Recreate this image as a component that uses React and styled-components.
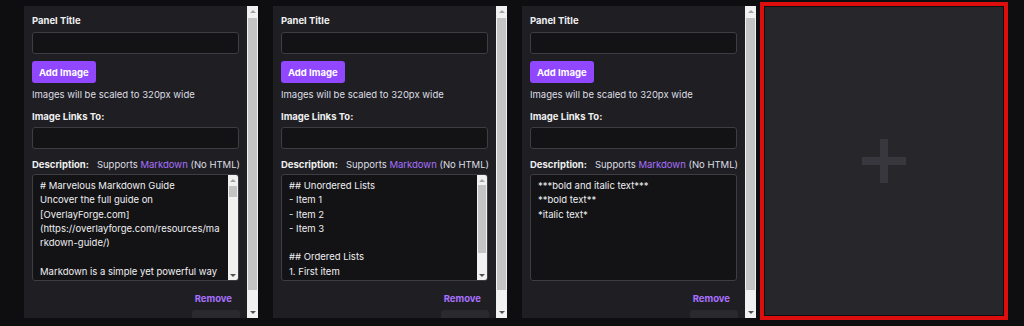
import React from "react";
import styled, { createGlobalStyle } from "styled-components";

const guideText = `# Marvelous Markdown Guide
Uncover the full guide on [OverlayForge.com](https://overlayforge.com/resources/markdown-guide/)

Markdown is a simple yet powerful way to format the text of your panels without writing any HTML.

## Headings
# Heading 1
## Heading 2
### Heading 3

## Emphasis
***bold and italic text***
**bold text**
*italic text*
~~strikethrough~~

## Unordered Lists
- Item 1
- Item 2
- Item 3

## Ordered Lists
1. First item
2. Second item
3. Third item

## Links
[OverlayForge](https://overlayforge.com)

## Quotes
> Quoted text goes here

## Horizontal Rule
---

Have fun making your panels stand out!`;

const listsText = `## Unordered Lists
- Item 1
- Item 2
- Item 3

## Ordered Lists
1. First item
2. Second item
3. Third item`;

const emphasisText = `***bold and italic text***
**bold text**
*italic text*`;

// thumb values are fractions of the scroll rail
const panels = [
  { id: 1, description: guideText, textThumb: { top: 0.01, size: 0.13 } },
  { id: 2, description: listsText, textThumb: { top: 0, size: 0.8 } },
  { id: 3, description: emphasisText, textThumb: null },
];

const GlobalStyle = createGlobalStyle`
  html, body {
    margin: 0;
    padding: 0;
    background: #0e0e10;
  }
  body {
    font-family: Inter, "Noto Sans", sans-serif;
    color: #efeff1;
    overflow: hidden;
  }
`;

const Row = styled.div`
  display: grid;
  grid-template-columns: repeat(3, 234px) 248px;
  column-gap: 15px;
  align-items: start;
  padding: 6px 0 0 24px;
  height: 326px;
  box-sizing: border-box;
`;

const Panel = styled.div`
  width: 234px;
  height: 312px;
  background: #1f1f23;
  display: flex;
`;

const Body = styled.div`
  flex: 1;
  min-width: 0;
  overflow: hidden;
  padding: 8px 8px 0;
  display: flex;
  flex-direction: column;
  & > * {
    flex-shrink: 0;
  }
`;

const Track = styled.div`
  width: ${(p) => p.$w}px;
  flex-shrink: 0;
  background: #f1f1f1;
  display: flex;
  flex-direction: column;
`;

const ArrowBox = styled.div`
  height: ${(p) => p.$w}px;
  display: flex;
  align-items: center;
  justify-content: center;
  &::after {
    content: "";
    border-left: 3px solid transparent;
    border-right: 3px solid transparent;
    ${(p) =>
      p.$down
        ? "border-top: 3px solid #505050;"
        : "border-bottom: 3px solid #a3a3a3;"}
  }
`;

const Rail = styled.div`
  flex: 1;
  position: relative;
`;

const Thumb = styled.div`
  position: absolute;
  left: 1px;
  right: 1px;
  background: #c4c4c4;
`;

const ScrollBar = ({ w, top, size }) => (
  <Track $w={w}>
    <ArrowBox $w={w} />
    <Rail>
      <Thumb style={{ top: `${top * 100}%`, height: `${size * 100}%` }} />
    </Rail>
    <ArrowBox $w={w} $down />
  </Track>
);

const Label = styled.div`
  font-size: 9.5px;
  font-weight: 700;
  line-height: 13px;
  color: #efeff1;
  margin-top: ${(p) => p.$top || 0}px;
`;

const Input = styled.input`
  display: block;
  width: 100%;
  height: 22px;
  box-sizing: border-box;
  margin-top: ${(p) => p.$top || 5}px;
  background: #131316;
  border: 1px solid #3d3d42;
  border-radius: 3px;
  color: #efeff1;
  font: 9.5px Inter, sans-serif;
  padding: 0 7px;
  outline: none;
`;

const AddButton = styled.button`
  align-self: flex-start;
  margin-top: 7px;
  height: 22px;
  padding: 0 7px;
  border: none;
  border-radius: 3px;
  background: #9147ff;
  color: #fff;
  font: 700 9.5px Inter, sans-serif;
  cursor: pointer;
`;

const Hint = styled.div`
  margin-top: 6px;
  font-size: 9.5px;
  line-height: 12px;
  color: #dedee3;
`;

const DescRow = styled.div`
  display: flex;
  align-items: baseline;
  gap: 8px;
  margin-top: 9px;
  line-height: 13px;
  white-space: nowrap;
`;

const Supports = styled.span`
  font-size: 9.5px;
  color: #dedee3;
`;

const MdLink = styled.a`
  color: #a970ff;
  text-decoration: none;
`;

const TextBox = styled.div`
  display: flex;
  height: 107px;
  margin-top: 3px;
  box-sizing: border-box;
  background: #131316;
  border: 1px solid #3d3d42;
  border-radius: 3px;
  overflow: hidden;
`;

const TextArea = styled.textarea`
  flex: 1;
  min-width: 0;
  margin: 0;
  padding: 4px 7px;
  background: transparent;
  border: none;
  color: #efeff1;
  font: 9.5px/14.3px Inter, sans-serif;
  resize: none;
  outline: none;
  overflow: hidden;
`;

const Actions = styled.div`
  display: flex;
  flex-direction: column;
  align-items: flex-end;
  margin-top: 7px;
`;

const RemoveButton = styled.button`
  height: 20px;
  padding: 0 7px;
  border: none;
  background: transparent;
  color: #a970ff;
  font: 700 9.5px Inter, sans-serif;
  cursor: pointer;
`;

const SaveButton = styled.button`
  width: 48px;
  height: 32px;
  margin: 2px -1px 0 0;
  border: none;
  border-radius: 3px;
  background: #29292e;
  color: #5c5c63;
  font: 700 9.5px Inter, sans-serif;
`;

const AddTile = styled.button`
  width: 248px;
  height: 318px;
  margin: -4px 0 0 -11px;
  box-sizing: border-box;
  border: 4px solid #dd0e0e;
  padding: 1px;
  background: #0e0e10;
  cursor: pointer;
`;

const AddInner = styled.div`
  height: 100%;
  background: #26262b;
  display: flex;
  align-items: center;
  justify-content: center;
`;

const PlusIcon = () => (
  <svg width="44" height="44" viewBox="0 0 44 44" aria-hidden="true">
    <rect x="18" y="0" width="8" height="44" fill="#37373d" />
    <rect x="0" y="18" width="44" height="8" fill="#37373d" />
  </svg>
);

const PanelEditor = ({ description, textThumb }) => (
  <Panel>
    <Body>
      <Label>Panel Title</Label>
      <Input type="text" />
      <AddButton>Add Image</AddButton>
      <Hint>Images will be scaled to 320px wide</Hint>
      <Label $top={9}>Image Links To:</Label>
      <Input type="text" $top={4} />
      <DescRow>
        <Label as="span">Description:</Label>
        <Supports>
          Supports <MdLink href="#">Markdown</MdLink> (No HTML)
        </Supports>
      </DescRow>
      <TextBox>
        <TextArea defaultValue={description} />
        {textThumb && (
          <ScrollBar w={10} top={textThumb.top} size={textThumb.size} />
        )}
      </TextBox>
      <Actions>
        <RemoveButton>Remove</RemoveButton>
        <SaveButton>Save</SaveButton>
      </Actions>
    </Body>
    <ScrollBar w={11} top={0.005} size={0.935} />
  </Panel>
);

export default function App() {
  return (
    <>
      <GlobalStyle />
      <Row>
        {panels.map((panel) => (
          <PanelEditor
            key={panel.id}
            description={panel.description}
            textThumb={panel.textThumb}
          />
        ))}
        <AddTile>
          <AddInner>
            <PlusIcon />
          </AddInner>
        </AddTile>
      </Row>
    </>
  );
}
